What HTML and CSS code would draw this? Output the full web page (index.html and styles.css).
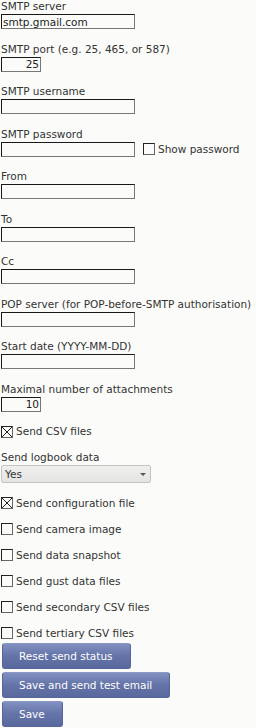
FILE: index.html
```html
<!DOCTYPE html>
<html lang="en">
<head>
    <meta charset="UTF-8">
    <meta name="viewport" content="width=device-width, initial-scale=1.0">
    <title>Email settings</title>
    <link rel="stylesheet" href="styles.css">
</head>
<body>
    <form class="settings">
        <div class="field">
            <label for="server">SMTP server</label>
            <input id="server" class="text" type="text" value="smtp.gmail.com">
        </div>
        <div class="field">
            <label for="port">SMTP port (e.g. 25, 465, or 587)</label>
            <input id="port" class="text num" type="text" value="25">
        </div>
        <div class="field">
            <label for="user">SMTP username</label>
            <input id="user" class="text" type="text">
        </div>
        <div class="field">
            <label for="pass">SMTP password</label>
            <div class="inline">
                <input id="pass" class="text" type="password">
                <label class="check show-pass"><input type="checkbox" class="box">Show password</label>
            </div>
        </div>
        <div class="field">
            <label for="from">From</label>
            <input id="from" class="text" type="text">
        </div>
        <div class="field">
            <label for="to">To</label>
            <input id="to" class="text" type="text">
        </div>
        <div class="field">
            <label for="cc">Cc</label>
            <input id="cc" class="text" type="text">
        </div>
        <div class="field">
            <label for="pop">POP server (for POP-before-SMTP authorisation)</label>
            <input id="pop" class="text" type="text">
        </div>
        <div class="field">
            <label for="start">Start date (YYYY-MM-DD)</label>
            <input id="start" class="text" type="text">
        </div>
        <div class="field">
            <label for="maxatt">Maximal number of attachments</label>
            <input id="maxatt" class="text num" type="text" value="10">
        </div>

        <label class="check row"><input type="checkbox" class="box" checked>Send CSV files</label>

        <div class="field">
            <label for="logbook">Send logbook data</label>
            <span class="select-wrap">
                <select id="logbook" class="select">
                    <option>Yes</option>
                    <option>No</option>
                </select>
            </span>
        </div>

        <label class="check row"><input type="checkbox" class="box" checked>Send configuration file</label>
        <label class="check row"><input type="checkbox" class="box">Send camera image</label>
        <label class="check row"><input type="checkbox" class="box">Send data snapshot</label>
        <label class="check row"><input type="checkbox" class="box">Send gust data files</label>
        <label class="check row"><input type="checkbox" class="box">Send secondary CSV files</label>
        <label class="check row last"><input type="checkbox" class="box">Send tertiary CSV files</label>

        <div class="actions">
            <button type="button" class="btn">Reset send status</button>
            <button type="button" class="btn">Save and send test email</button>
            <button type="submit" class="btn">Save</button>
        </div>
    </form>
    <script>
        const pass = document.getElementById('pass');
        document.querySelector('.show-pass input').addEventListener('change', (e) => {
            pass.type = e.target.checked ? 'text' : 'password';
        });
    </script>
</body>
</html>
```

FILE: styles.css
```css
body {
    margin: 0;
    padding: 0 0 0 1px;
    background: #fbfcfa;
    color: #333;
    font-family: "DejaVu Sans", sans-serif;
    font-size: 10.5px;
}

.settings {
    display: flex;
    flex-direction: column;
    align-items: flex-start;
}

.field {
    display: flex;
    flex-direction: column;
    align-items: flex-start;
    gap: 1px;
    margin-bottom: 13.5px;
}

.field > label {
    height: 13px;
    line-height: 13px;
    white-space: nowrap;
}

.text {
    box-sizing: border-box;
    width: 134px;
    height: 15px;
    margin: 0;
    padding: 0 1px;
    border: 1px solid #1a1a1a;
    border-right-color: #777;
    border-bottom-color: #777;
    border-radius: 0;
    background: #fbfcfa;
    color: #222;
    font: inherit;
    line-height: 13px;
}

.num {
    width: 40px;
    text-align: right;
}

.inline {
    display: flex;
    align-items: center;
    gap: 8px;
}

.check {
    display: flex;
    align-items: center;
    gap: 3px;
    height: 13px;
    line-height: 13px;
    white-space: nowrap;
}

.row {
    margin-bottom: 13px;
}

.row.last {
    margin-bottom: 3px;
}

.box {
    appearance: none;
    -webkit-appearance: none;
    box-sizing: border-box;
    width: 12px;
    height: 12px;
    margin: 0;
    border: 1px solid #222;
    border-right-color: #666;
    border-bottom-color: #666;
    background: #fbfcfa;
}

.box:checked {
    background:
        linear-gradient(45deg, transparent calc(50% - 0.6px), #222 50%, transparent calc(50% + 0.6px)),
        linear-gradient(-45deg, transparent calc(50% - 0.6px), #222 50%, transparent calc(50% + 0.6px)),
        #fbfcfa;
}

.select-wrap {
    position: relative;
    display: block;
}

.select-wrap::after {
    content: "";
    position: absolute;
    right: 5px;
    top: 8px;
    border-left: 3px solid transparent;
    border-right: 3px solid transparent;
    border-top: 3px solid #555;
    pointer-events: none;
}

.select {
    appearance: none;
    -webkit-appearance: none;
    box-sizing: border-box;
    display: block;
    width: 150px;
    height: 18px;
    margin: 0;
    padding: 0 3px;
    border: 1px solid #c4c4c4;
    border-radius: 2px;
    background: linear-gradient(#f0f0ef, #e4e4e3);
    color: #333;
    font: inherit;
}

.actions {
    display: flex;
    flex-direction: column;
    align-items: flex-start;
    gap: 3px;
    padding-left: 1px;
}

.btn {
    box-sizing: border-box;
    height: 26px;
    padding: 0 17px 0 16px;
    border: 1px solid #56659a;
    border-top-color: #8b97c4;
    border-radius: 3px;
    background: linear-gradient(#8190c0, #6574a8 50%, #5a699d);
    color: #fff;
    font: inherit;
    cursor: pointer;
}

.btn:hover {
    background: linear-gradient(#8d9bcb, #6f7eb2 50%, #6372a6);
}
```
